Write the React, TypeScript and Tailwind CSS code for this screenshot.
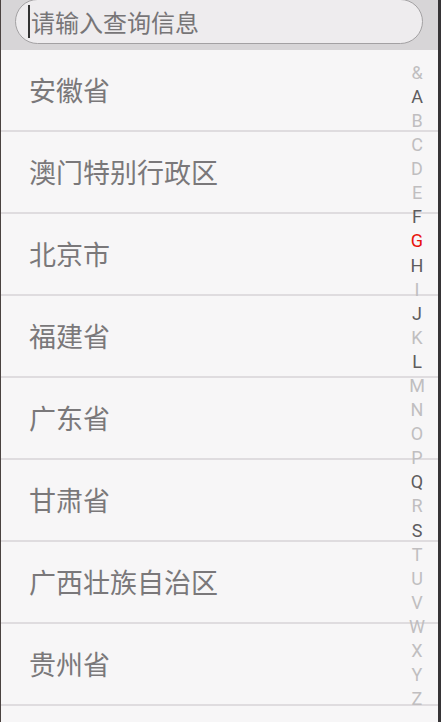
import React from 'react';

const provinces = [
  '安徽省',
  '澳门特别行政区',
  '北京市',
  '福建省',
  '广东省',
  '甘肃省',
  '广西壮族自治区',
  '贵州省',
];

const letters: { ch: string; tone: 'light' | 'dark' | 'active' }[] = [
  { ch: '&', tone: 'light' },
  { ch: 'A', tone: 'dark' },
  { ch: 'B', tone: 'light' },
  { ch: 'C', tone: 'light' },
  { ch: 'D', tone: 'light' },
  { ch: 'E', tone: 'light' },
  { ch: 'F', tone: 'dark' },
  { ch: 'G', tone: 'active' },
  { ch: 'H', tone: 'dark' },
  { ch: 'I', tone: 'light' },
  { ch: 'J', tone: 'dark' },
  { ch: 'K', tone: 'light' },
  { ch: 'L', tone: 'dark' },
  { ch: 'M', tone: 'light' },
  { ch: 'N', tone: 'light' },
  { ch: 'O', tone: 'light' },
  { ch: 'P', tone: 'light' },
  { ch: 'Q', tone: 'dark' },
  { ch: 'R', tone: 'light' },
  { ch: 'S', tone: 'dark' },
  { ch: 'T', tone: 'light' },
  { ch: 'U', tone: 'light' },
  { ch: 'V', tone: 'light' },
  { ch: 'W', tone: 'light' },
  { ch: 'X', tone: 'light' },
  { ch: 'Y', tone: 'light' },
  { ch: 'Z', tone: 'light' },
];

const toneClass = {
  light: 'text-[#c0bec0]',
  dark: 'text-[#5e5c5e]',
  active: 'text-[#e8120c]',
};

const App: React.FC = () => {
  return (
    <div className="w-[441px] h-[722px] overflow-hidden flex flex-col bg-[#f7f6f7] border-l border-l-[#4a4240] border-r-[3px] border-r-[#363436] font-['Noto_Sans_CJK_SC',sans-serif]">
      {/* search bar */}
      <div className="h-[50px] shrink-0 bg-[#d7d5d7] pl-[14px] pr-[15px]">
        <div className="h-[45px] -mt-px rounded-full border-[1.5px] border-[#a3a1a3] bg-[#eeecee] flex items-center pl-[12px]">
          <div className="w-[2px] h-[33px] bg-[#333] mr-px" />
          <span className="text-[24px] leading-none text-[#777577]">请输入查询信息</span>
        </div>
      </div>

      {/* list */}
      <div className="relative flex-1 overflow-hidden">
        <div className="flex flex-col">
          {provinces.map((name) => (
            <div
              key={name}
              className="h-[82px] shrink-0 flex items-center pl-[28px] pb-px border-b-2 border-[#dfdcdf] text-[27px] leading-none text-[#7a787a]"
            >
              {name}
            </div>
          ))}
        </div>

        {/* alphabet index */}
        <div className="absolute top-0 bottom-0 right-0 w-[42px] flex flex-col justify-center items-center font-['Roboto',sans-serif]">
          {letters.map((l) => (
            <div
              key={l.ch}
              className={`h-[24.1px] flex items-center justify-center text-[18px] leading-none ${toneClass[l.tone]}`}
            >
              {l.ch}
            </div>
          ))}
        </div>
      </div>
    </div>
  );
};

export default App;
